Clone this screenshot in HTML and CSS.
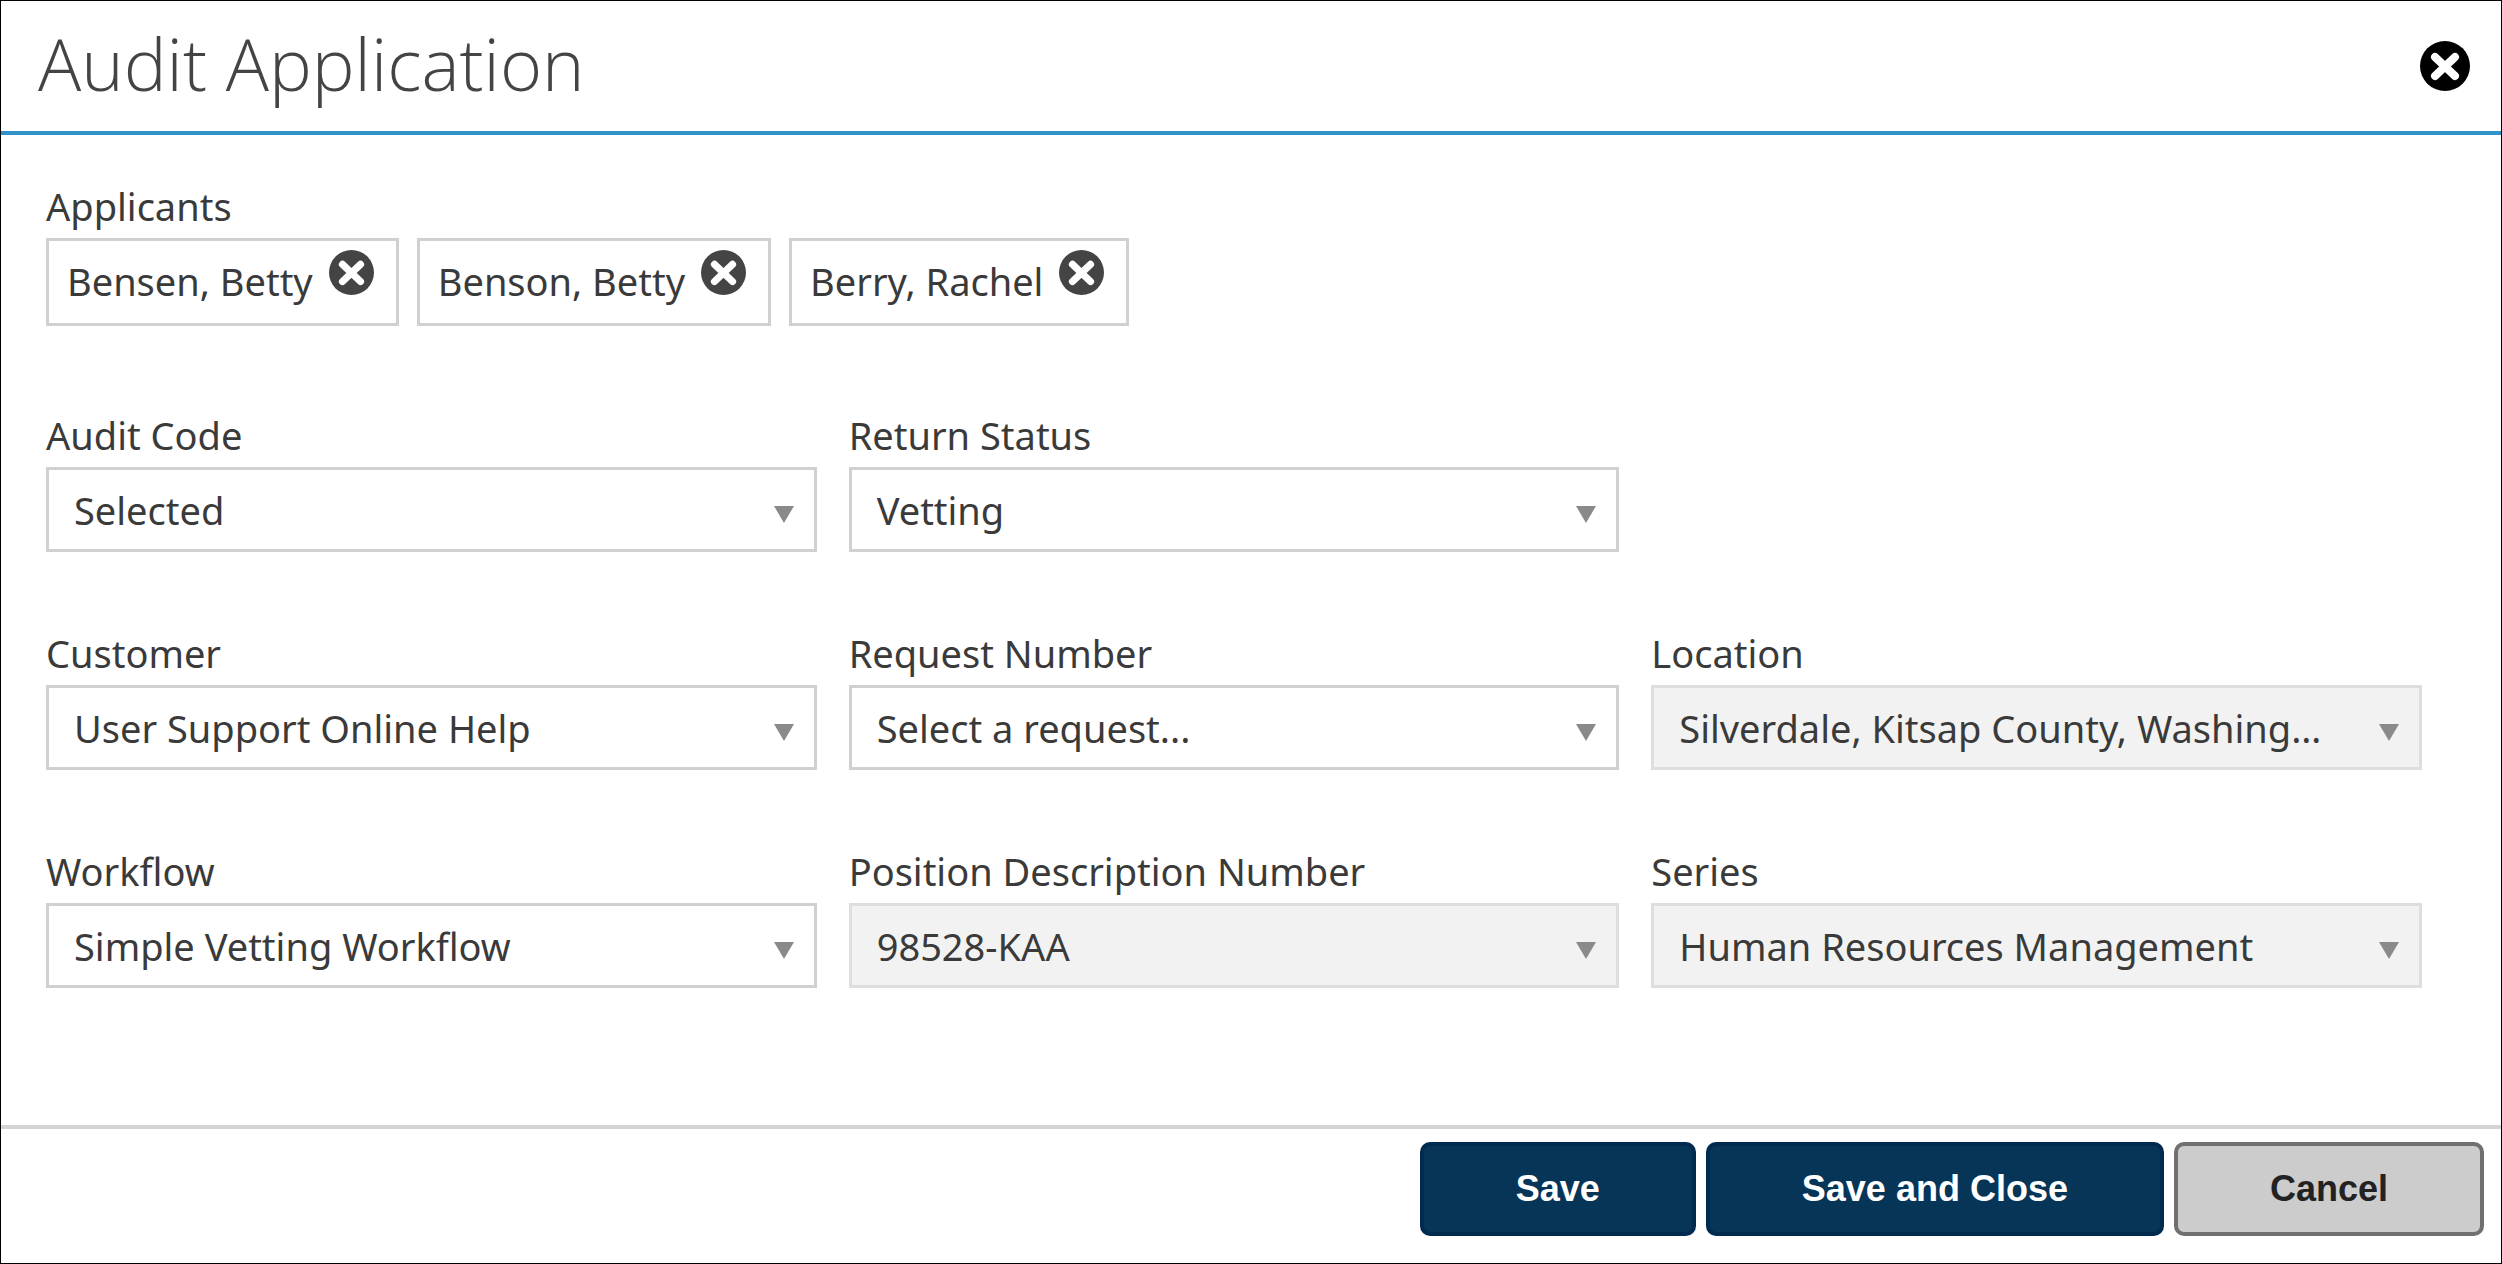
FILE: index.html
```html
<!DOCTYPE html>
<html lang="en">
<head>
    <meta charset="UTF-8">
    <meta name="viewport" content="width=device-width, initial-scale=1.0">
    <title>Audit Application</title>
    <link rel="stylesheet" href="styles.css">
</head>
<body>

    <!-- shared icon -->
    <svg class="sprite" aria-hidden="true">
        <symbol id="icon-close" viewBox="0 0 50 50">
            <circle cx="25" cy="25" r="25" fill="currentColor"/>
            <path d="M15 16L35 35M35 16L15 35" stroke="#fff" stroke-width="8" stroke-linecap="round"/>
        </symbol>
    </svg>

    <form class="dialog">
        <header class="dialog-header">
            <h1>Audit Application</h1>
            <button type="button" class="close" aria-label="Close"><svg><use href="#icon-close"/></svg></button>
        </header>

        <main class="dialog-body">
            <section class="applicants">
                <h2 class="label">Applicants</h2>
                <ul class="chips">
                    <li class="chip">Bensen, Betty <button type="button" aria-label="Remove Bensen, Betty"><svg><use href="#icon-close"/></svg></button></li>
                    <li class="chip">Benson, Betty <button type="button" aria-label="Remove Benson, Betty"><svg><use href="#icon-close"/></svg></button></li>
                    <li class="chip">Berry, Rachel <button type="button" aria-label="Remove Berry, Rachel"><svg><use href="#icon-close"/></svg></button></li>
                </ul>
            </section>

            <div class="fields">
                <div class="field">
                    <label class="label" for="auditCode">Audit Code</label>
                    <div class="dropdown"><select id="auditCode"><option>Selected</option></select></div>
                </div>
                <div class="field">
                    <label class="label" for="returnStatus">Return Status</label>
                    <div class="dropdown"><select id="returnStatus"><option>Vetting</option></select></div>
                </div>
                <div class="field new-row">
                    <label class="label" for="customer">Customer</label>
                    <div class="dropdown"><select id="customer"><option>User Support Online Help</option></select></div>
                </div>
                <div class="field">
                    <label class="label" for="requestNumber">Request Number</label>
                    <div class="dropdown"><select id="requestNumber"><option>Select a request...</option></select></div>
                </div>
                <div class="field">
                    <label class="label" for="location">Location</label>
                    <div class="dropdown"><select id="location" disabled><option>Silverdale, Kitsap County, Washington</option></select></div>
                </div>
                <div class="field">
                    <label class="label" for="workflow">Workflow</label>
                    <div class="dropdown"><select id="workflow"><option>Simple Vetting Workflow</option></select></div>
                </div>
                <div class="field">
                    <label class="label" for="positionNumber">Position Description Number</label>
                    <div class="dropdown"><select id="positionNumber" disabled><option>98528-KAA</option></select></div>
                </div>
                <div class="field">
                    <label class="label" for="series">Series</label>
                    <div class="dropdown"><select id="series" disabled><option>Human Resources Management</option></select></div>
                </div>
            </div>
        </main>

        <footer class="dialog-footer">
            <button type="button" class="btn">Save</button>
            <button type="button" class="btn">Save and Close</button>
            <button type="button" class="btn btn-cancel">Cancel</button>
        </footer>
    </form>

</body>
</html>
```

FILE: styles.css
```css
* {
    box-sizing: border-box;
}
body {
    margin: 0;
    background-color: #fff;
    color: #3a3a3a;
    font-family: "Noto Sans", sans-serif;
    font-size: 38px;
    line-height: 46px;
}
button,
select {
    font: inherit;
    color: inherit;
}
.sprite {
    display: none;
}
.dialog {
    display: flex;
    flex-direction: column;
    min-height: 100vh;
    border: 1px solid #000;
}

/* header */
.dialog-header {
    display: flex;
    align-items: center;
    justify-content: space-between;
    padding: 20px 31px 20px 37px;
    border-bottom: 4px solid #2f93c8;
}
h1 {
    margin: 0;
    padding-bottom: 6px;
    color: #444;
    font-family: "Open Sans", sans-serif;
    font-size: 72px;
    font-weight: 300;
    line-height: 84px;
}
.close,
.chip button {
    display: flex;
    padding: 0;
    border: none;
    background: none;
    cursor: pointer;
}
.close svg {
    width: 50px;
    height: 50px;
    color: #000;
}

/* body */
.dialog-body {
    flex: 1;
    padding: 48px 79px 48px 45px;
}
.label {
    display: block;
    margin: 0 0 9px;
    font-size: 38px;
    font-weight: 400;
}
.chips {
    display: flex;
    gap: 18px;
    margin: 0 0 86px;
    padding: 0;
    list-style: none;
}
.chip {
    display: flex;
    align-items: flex-start;
    gap: 16px;
    height: 88px;
    padding: 9px 22px 8px 18px;
    border: 3px solid #d0d0d0;
    line-height: 62px;
}
.chip svg {
    width: 45px;
    height: 45px;
    color: #444;
}
.fields {
    display: grid;
    grid-template-columns: repeat(3, minmax(0, 1fr));
    gap: 78px 32px;
}
.new-row {
    grid-column-start: 1;
}
.dropdown {
    position: relative;
}
.dropdown::after {
    content: "";
    position: absolute;
    top: 39px;
    right: 23px;
    border: 10px solid transparent;
    border-top: 17px solid #8a8a8a;
    border-bottom: none;
    pointer-events: none;
}
select {
    display: block;
    width: 100%;
    height: 85px;
    padding: 0 90px 0 25px;
    appearance: none;
    background-color: #fff;
    border: 3px solid #d0d0d0;
    border-radius: 0;
    line-height: 60px;
    text-overflow: ellipsis;
}
select:disabled {
    background-color: #f2f2f2;
    border-color: #dedede;
    color: inherit;
    opacity: 1;
}

/* footer */
.dialog-footer {
    display: flex;
    justify-content: flex-end;
    gap: 10px;
    padding: 13px 17px 27px;
    border-top: 4px solid #d4d4d4;
}
.btn {
    height: 94px;
    padding: 0 92px;
    background-color: #073558;
    border: 4px solid #002a4e;
    border-radius: 10px;
    color: #fff;
    font-family: "Liberation Sans", sans-serif;
    font-size: 36px;
    font-weight: 700;
    cursor: pointer;
}
.btn-cancel {
    background-color: #ccc;
    border-color: #707070;
    color: #222;
}
```
